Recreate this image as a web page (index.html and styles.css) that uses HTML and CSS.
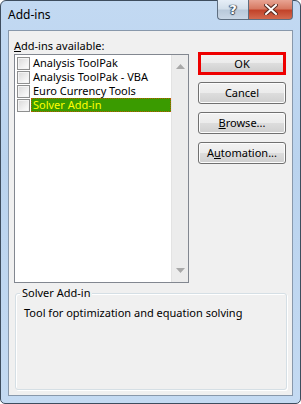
FILE: index.html
```html
<!DOCTYPE html>
<html>
<head>
<meta charset="utf-8">
<link rel="stylesheet" href="styles.css">
</head>
<body>
<div class="window">
  <div class="titlebar">
    <span class="title">Add-ins</span>
    <div class="caption-btns">
      <div class="cbtn help"><span>?</span></div>
      <div class="cbtn close">
        <svg width="14" height="11" viewBox="0 0 14 11"><path d="M2 1 L12 10 M12 1 L2 10" stroke="#5a2a20" stroke-width="4" stroke-linecap="square"/><path d="M2 1 L12 10 M12 1 L2 10" stroke="#ffffff" stroke-width="2" stroke-linecap="square"/></svg>
      </div>
    </div>
  </div>
  <div class="client">
    <div class="top">
      <div class="left">
        <div class="label"><u>A</u>dd-ins available:</div>
        <div class="listbox">
          <div class="items">
            <div class="item"><span class="chk"></span><span class="txt">Analysis ToolPak</span></div>
            <div class="item"><span class="chk"></span><span class="txt">Analysis ToolPak - VBA</span></div>
            <div class="item"><span class="chk"></span><span class="txt">Euro Currency Tools</span></div>
            <div class="item"><span class="chk"></span><span class="txt sel">Solver Add-in</span></div>
          </div>
          <div class="scrollbar">
            <svg class="arr" width="9" height="5" viewBox="0 0 9 5"><path d="M0 5 L4.5 0 L9 5 Z" fill="#a8a8a8"/></svg>
            <svg class="arr" width="9" height="5" viewBox="0 0 9 5"><path d="M0 0 L9 0 L4.5 5 Z" fill="#a8a8a8"/></svg>
          </div>
        </div>
      </div>
      <div class="buttons">
        <div class="btn ok">OK</div>
        <div class="btn">Cancel</div>
        <div class="btn"><span><u>B</u>rowse...</span></div>
        <div class="btn"><span>A<u>u</u>tomation...</span></div>
      </div>
    </div>
    <div class="group">
      <span class="legend">Solver Add-in</span>
      <div class="desc">Tool for optimization and equation solving</div>
    </div>
  </div>
</div>
</body>
</html>
```
FILE: styles.css
```css
* { box-sizing: border-box; }
html, body { margin: 0; padding: 0; background: #ffffff; }
body { font-family: "Noto Sans", "Open Sans", sans-serif; font-size: 11px; color: #000; }

.window {
  width: 301px;
  height: 404px;
  border: 1px solid #3e4d5e;
  border-radius: 6px 6px 5px 5px;
  background: linear-gradient(to bottom, #c2d9f2 0%, #bad3ee 40%, #c4daf2 100%);
  display: flex;
  flex-direction: column;
  padding: 0 7px 7px 7px;
}

.titlebar {
  height: 29px;
  display: flex;
  align-items: flex-start;
}
.title {
  margin-top: 7px;
  line-height: 14px;
  font-size: 12px;
}
.caption-btns {
  margin-left: auto;
  display: flex;
  margin-top: -1px;
}
.cbtn {
  height: 20px;
  border: 1px solid #5e6e80;
  border-top: none;
  display: flex;
  align-items: center;
  justify-content: center;
}
.help {
  width: 31px;
  border-radius: 0 0 0 4px;
  border-right: none;
  background: linear-gradient(to bottom, #e6eef7 0%, #d3dfeb 45%, #b9c9da 55%, #c9d7e6 100%);
}
.help span {
  font-family: "DejaVu Sans", sans-serif;
  font-weight: bold;
  font-size: 13px;
  color: #ffffff;
  text-shadow: 0 0 1px #3a4a5c, 1px 0 1px #3a4a5c, -1px 0 1px #3a4a5c, 0 1px 1px #3a4a5c;
  margin-top: -1px;
}
.close {
  width: 45px;
  border-radius: 0 0 4px 0;
  background: linear-gradient(to bottom, #e8a493 0%, #d77a63 45%, #c2432a 55%, #d36a4f 100%);
}

.client {
  flex: 1;
  background: #f0f0f0;
  border: 1px solid #8898ab;
  padding: 0 6px 0 5px;
  display: flex;
  flex-direction: column;
}

.top {
  display: flex;
  gap: 9px;
}
.left {
  width: 177px;
  display: flex;
  flex-direction: column;
}
.label {
  margin-top: 7px;
  line-height: 16px;
  height: 16px;
}
.listbox {
  height: 229px;
  border: 1px solid #828790;
  background: #ffffff;
  display: flex;
}
.items {
  flex: 1;
  padding-top: 1px;
  padding-left: 2px;
}
.item {
  display: flex;
  align-items: center;
  height: 14px;
}
.chk {
  width: 13px;
  height: 13px;
  border: 1px solid #8e8f8f;
  background: linear-gradient(135deg, #d8d8d8 0%, #f0f0f0 60%, #ffffff 100%);
  box-shadow: inset 0 0 0 1px #f4f4f4;
  flex: none;
}
.txt {
  margin-left: 1px;
  padding: 0 2px;
  height: 14px;
  line-height: 14px;
  white-space: nowrap;
}
.sel {
  background: #3a9b00;
  color: #ffff00;
  flex: 1;
  outline: 1px dotted #b85a00;
  outline-offset: -1px;
}
.scrollbar {
  width: 17px;
  background: #ececec;
  border-left: 1px solid #e3e3e3;
  display: flex;
  flex-direction: column;
  justify-content: space-between;
  align-items: center;
  padding: 9px 0 9px 0;
}

.buttons {
  display: flex;
  flex-direction: column;
  gap: 8px;
  padding-top: 21px;
}
.btn {
  width: 88px;
  height: 22px;
  border: 1px solid #707070;
  border-radius: 3px;
  background: linear-gradient(to bottom, #f2f2f2 0%, #ebebeb 50%, #dddddd 50%, #cfcfcf 100%);
  box-shadow: inset 0 0 0 1px #fcfcfc;
  display: flex;
  align-items: center;
  justify-content: center;
  line-height: 14px;
}
.ok {
  height: 23px;
  border: 3px solid #ee0000;
  border-radius: 0;
  box-shadow: none;
  margin-bottom: -1px;
}

.group {
  margin-top: 10px;
  margin-left: 1px;
  width: 272px;
  height: 97px;
  border: 1px solid #d5dfe5;
  border-radius: 3px;
  box-shadow: inset 1px 1px 0 #ffffff, 1px 1px 0 #ffffff;
  position: relative;
  padding: 11px 0 0 8px;
}
.legend {
  position: absolute;
  top: -9px;
  left: 4px;
  padding: 0 2px 0 2px;
  background: #f0f0f0;
  line-height: 16px;
}
.desc {
  line-height: 16px;
}
```
